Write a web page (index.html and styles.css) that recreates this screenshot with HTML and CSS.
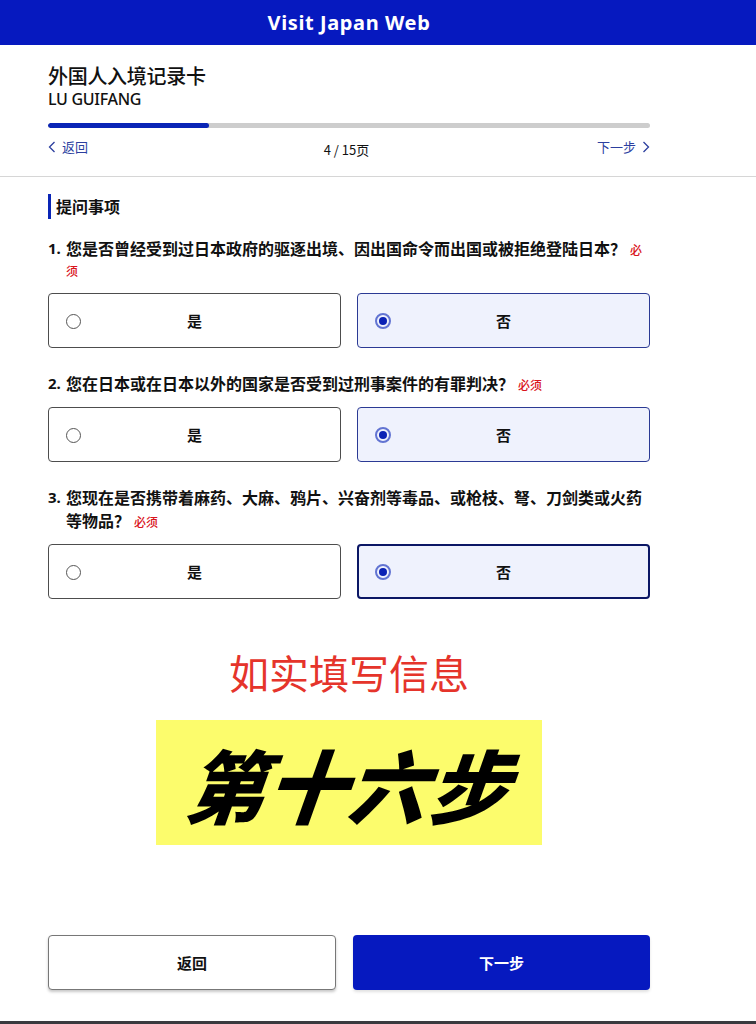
FILE: index.html
```html
<!DOCTYPE html>
<html lang="zh-CN">
<head>
<meta charset="utf-8">
<title>Visit Japan Web</title>
<link rel="stylesheet" href="styles.css">
</head>
<body>
<header class="topbar">Visit Japan Web</header>

<section class="head">
  <div class="wrap">
    <h1 class="title">外国人入境记录卡</h1>
    <div class="name">LU GUIFANG</div>
    <div class="progress"><div class="progress-fill" style="width:26.67%"></div></div>
    <nav class="pager">
      <a class="pager-link">
        <svg class="chev" viewBox="0 0 8 12" width="8" height="12"><path d="M6.5 1 L1.5 6 L6.5 11" fill="none" stroke="currentColor" stroke-width="1.3"/></svg>
        <span>返回</span>
      </a>
      <span class="pager-count">4 / 15页</span>
      <a class="pager-link">
        <span>下一步</span>
        <svg class="chev" viewBox="0 0 8 12" width="8" height="12"><path d="M1.5 1 L6.5 6 L1.5 11" fill="none" stroke="currentColor" stroke-width="1.3"/></svg>
      </a>
    </nav>
  </div>
</section>

<main class="wrap main">
  <h2 class="section-title">提问事项</h2>

  <div class="q q-first">
    <span class="q-num">1.</span>
    <p class="q-text">您是否曾经受到过日本政府的驱逐出境、因出国命令而出国或被拒绝登陆日本？<span class="req">必须</span></p>
  </div>
  <div class="opts">
    <div class="opt"><span class="radio"></span><span class="opt-label">是</span></div>
    <div class="opt opt-on"><span class="radio radio-on"></span><span class="opt-label">否</span></div>
  </div>

  <div class="q">
    <span class="q-num">2.</span>
    <p class="q-text">您在日本或在日本以外的国家是否受到过刑事案件的有罪判决？<span class="req">必须</span></p>
  </div>
  <div class="opts">
    <div class="opt"><span class="radio"></span><span class="opt-label">是</span></div>
    <div class="opt opt-on"><span class="radio radio-on"></span><span class="opt-label">否</span></div>
  </div>

  <div class="q">
    <span class="q-num">3.</span>
    <p class="q-text">您现在是否携带着麻药、大麻、鸦片、兴奋剂等毒品、或枪枝、弩、刀剑类或火药等物品？<span class="req">必须</span></p>
  </div>
  <div class="opts">
    <div class="opt"><span class="radio"></span><span class="opt-label">是</span></div>
    <div class="opt opt-on opt-focus"><span class="radio radio-on"></span><span class="opt-label">否</span></div>
  </div>

  <p class="hint">如实填写信息</p>
  <div class="step-box"><span class="step-text">第十六步</span></div>

  <div class="actions">
    <button class="btn btn-back">返回</button>
    <button class="btn btn-next">下一步</button>
  </div>
</main>
<div class="bottom-strip"></div>
</body>
</html>
```

FILE: styles.css
```css
* { box-sizing: border-box; }
html, body { margin: 0; padding: 0; }
body {
  font-family: "Noto Sans", "Noto Sans CJK SC", sans-serif;
  color: #111;
  background: #fff;
  width: 756px;
}

.topbar {
  height: 45px;
  background: #0619bf;
  color: #fff;
  font-family: "Noto Sans", sans-serif;
  font-weight: 700;
  font-size: 20px;
  letter-spacing: 0.6px;
  display: flex;
  align-items: center;
  justify-content: center;
  padding-right: 58px;
}

.wrap {
  margin-left: 48px;
  width: 602px;
}

.head {
  border-bottom: 1px solid #d6d6d6;
  padding-top: 18px;
  padding-bottom: 18px;
}

.title {
  margin: 0;
  font-family: "Noto Sans CJK SC", sans-serif;
  font-weight: 500;
  font-size: 20px;
  line-height: 26px;
  letter-spacing: -0.3px;
}

.name {
  font-family: "Noto Sans", sans-serif;
  font-weight: 500;
  font-size: 16px;
  line-height: 20px;
  letter-spacing: -0.3px;
}

.progress {
  margin-top: 14px;
  height: 5px;
  background: #cdcdcd;
  border-radius: 3px;
  overflow: hidden;
}
.progress-fill {
  height: 100%;
  background: #0a25b6;
  border-radius: 3px;
}

.pager {
  margin-top: 12px;
  display: flex;
  justify-content: space-between;
  align-items: center;
  font-family: "Noto Sans CJK SC", sans-serif;
  font-size: 13px;
  line-height: 16px;
}
.pager-link {
  color: #2c3f9f;
  display: flex;
  align-items: center;
  gap: 6px;
  margin-top: -4px;
}
.pager-count {
  color: #111;
  margin-left: 8px;
  margin-top: 2px;
}
.chev { display: block; }

.main {
  padding-top: 17px;
}

.section-title {
  margin: 0;
  border-left: 3px solid #0a25b6;
  padding-left: 5px;
  font-family: "Noto Sans CJK SC", sans-serif;
  font-weight: 700;
  font-size: 16px;
  line-height: 25px;
}

.q {
  display: flex;
  margin-top: 24px;
  font-family: "Noto Sans CJK SC", sans-serif;
  font-weight: 700;
  font-size: 16px;
  line-height: 23px;
}
.section-title + .q { margin-top: 19px; }
.q-first { line-height: 21px; }
.q-num {
  flex: 0 0 18px;
  font-family: "Noto Sans", sans-serif;
  font-size: 15px;
}
.q-text {
  margin: 0;
  flex: 1;
}
.req {
  color: #d9141c;
  font-size: 12px;
  line-height: 1;
  font-weight: 500;
  margin-left: 4px;
}

.opts {
  margin-top: 12px;
  display: grid;
  grid-template-columns: 1fr 1fr;
  gap: 16px;
}
.q-first + .opts { margin-top: 13px; }
.opt {
  position: relative;
  height: 55px;
  border: 1px solid #4d4d4d;
  border-radius: 4px;
  display: flex;
  align-items: center;
  justify-content: center;
  background: #fff;
}
.opt-on {
  background: #eff2fd;
  border-color: #2b3a94;
}
.opt-focus {
  border: 2px solid #0b1765;
}
.opt-label {
  font-family: "Noto Sans CJK SC", sans-serif;
  font-weight: 700;
  font-size: 15px;
}
.radio {
  position: absolute;
  left: 17px;
  top: 50%;
  margin-top: -7px;
  width: 15px;
  height: 15px;
  border: 1.5px solid #555;
  border-radius: 50%;
  background: #fff;
}
.opt-focus .radio { left: 16px; }
.radio-on {
  width: 16px;
  height: 16px;
  margin-top: -8px;
  border: 2px solid #6274d2;
  padding: 2px;
  background: #0b22b5;
  background-clip: content-box;
}

.hint {
  margin: 49px 0 0;
  text-align: center;
  color: #e5342b;
  font-family: "Noto Sans CJK SC", sans-serif;
  font-size: 40px;
  line-height: 48px;
  font-weight: 400;
}

.step-box {
  margin: 24px auto 0;
  width: 386px;
  height: 125px;
  background: #fcfc6c;
  display: flex;
  align-items: center;
  justify-content: center;
}
.step-text {
  font-family: "Noto Sans CJK SC", sans-serif;
  font-weight: 900;
  font-size: 80px;
  line-height: 1;
  font-style: italic;
  letter-spacing: 1px;
  color: #000;
  transform: skewX(-6deg);
}

.actions {
  margin-top: 90px;
  display: grid;
  grid-template-columns: 288px 297px;
  column-gap: 17px;
}
.btn {
  height: 55px;
  border-radius: 4px;
  font-family: "Noto Sans CJK SC", sans-serif;
  font-weight: 700;
  font-size: 15px;
  cursor: pointer;
}
.btn-back {
  background: #fff;
  color: #111;
  border: 1.5px solid #777;
  box-shadow: 0 2px 3px rgba(0,0,0,0.22);
}
.btn-next {
  background: #0619bf;
  color: #fff;
  border: none;
  box-shadow: 0 2px 3px rgba(0,0,0,0.12);
}

.bottom-strip {
  margin-top: 31px;
  height: 3px;
  background: #3a3a3f;
}
```
